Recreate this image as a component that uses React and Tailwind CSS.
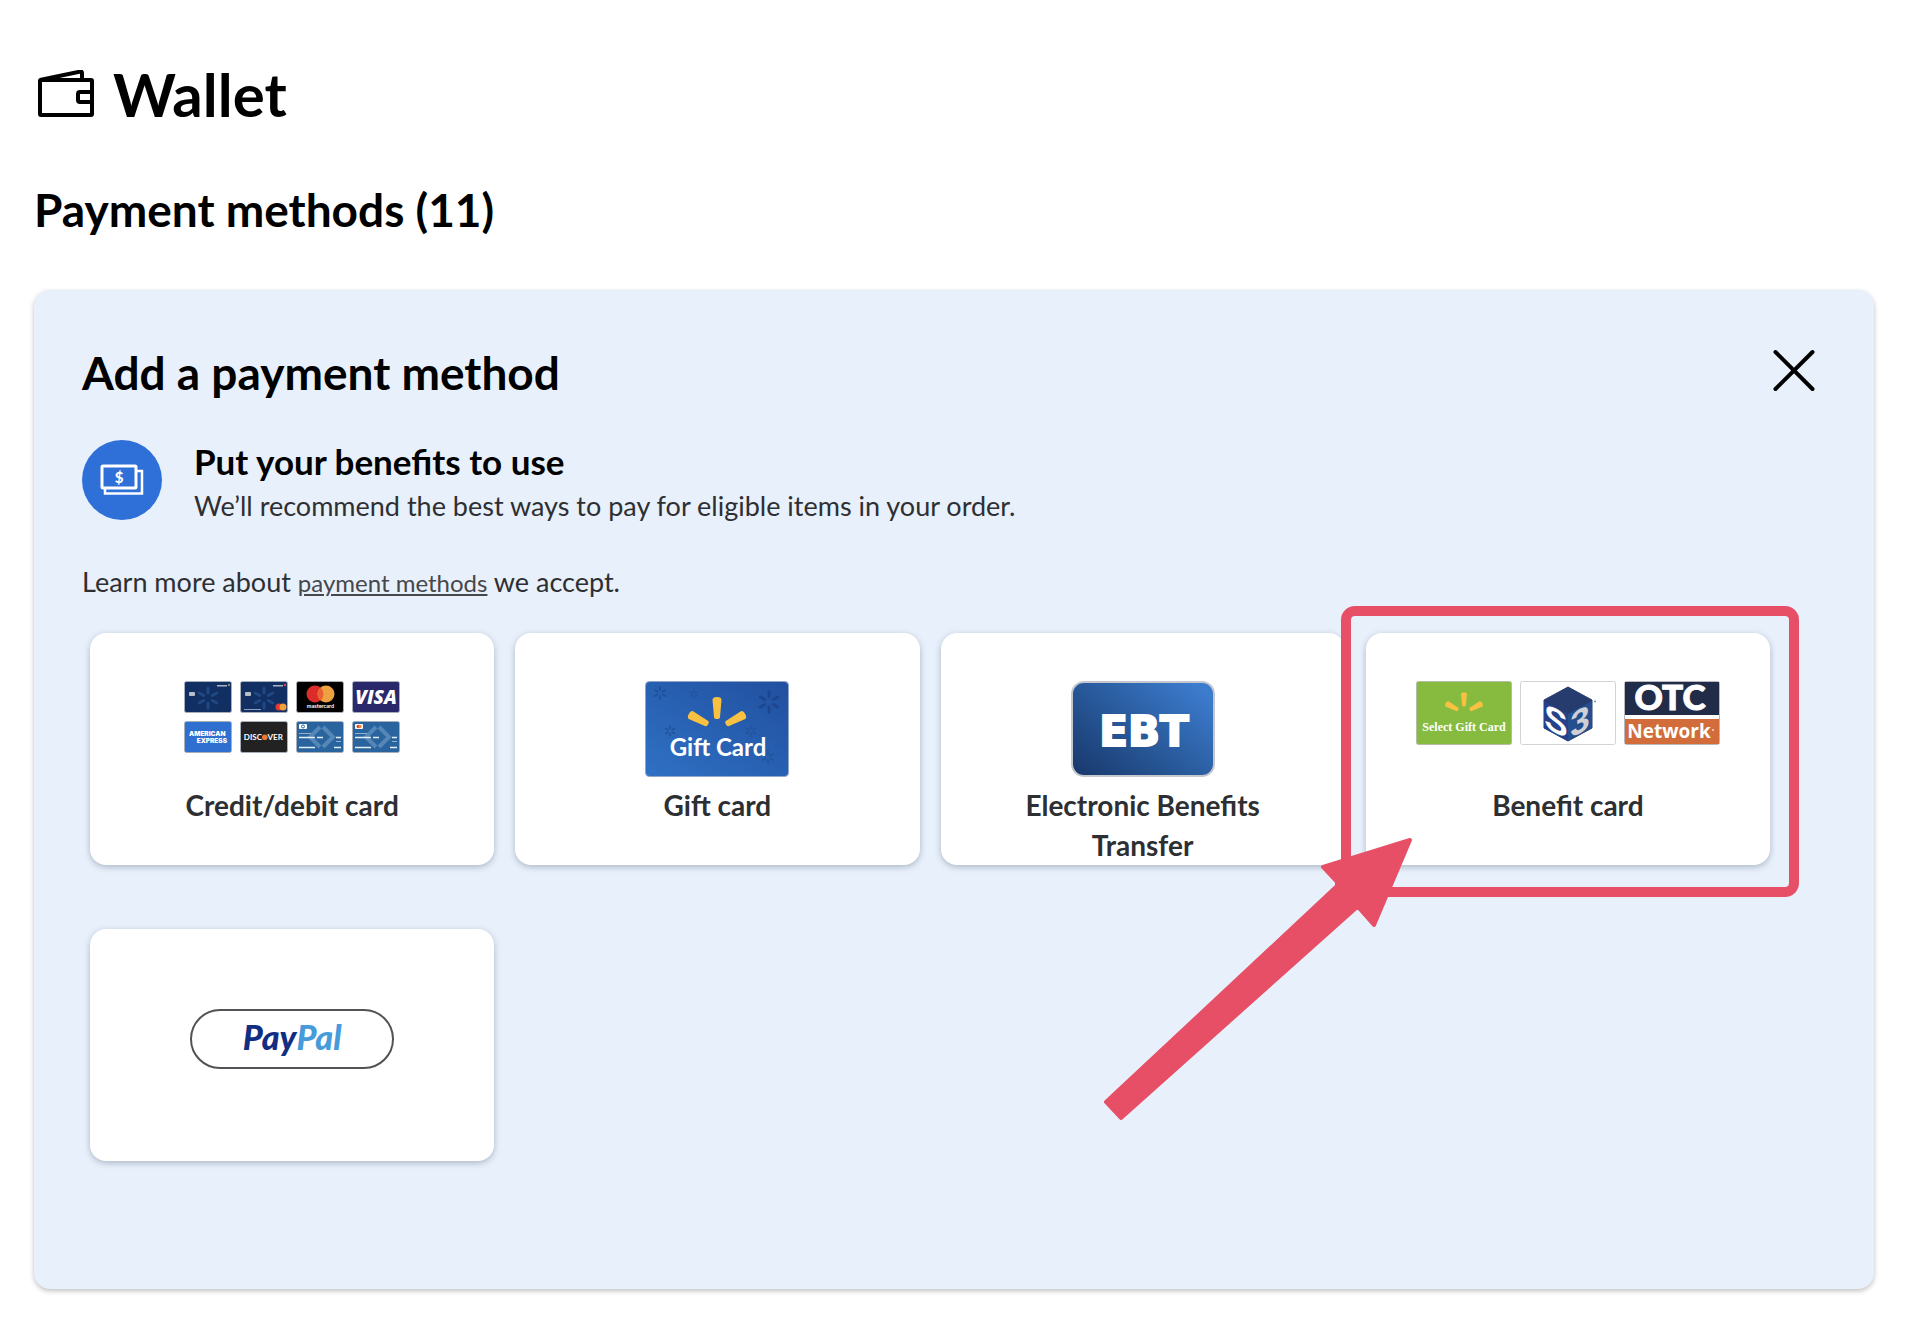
import { useState } from 'react';

function WalletIcon() {
    return (
        <svg className="h-12 w-[58px]" viewBox="0 0 58 48" fill="none" stroke="#000" strokeWidth="4" strokeLinejoin="round" aria-hidden="true">
            <rect x="3" y="10" width="52" height="35" rx="1" />
            <path d="M3 10 43.500 1.500Q45 1.500 45 3V10" />
            <path d="M55 22H43Q41 22 41 24V30Q41 32 43 32H55" />
        </svg>
    );
}

function CashIcon() {
    return (
        <svg className="h-20 w-20 shrink-0" viewBox="0 0 80 80" fill="none" aria-hidden="true">
            <circle cx="40" cy="40" r="40" fill="#2f6fd8" />
            <path d="M55 31H60V53.500H23V48" stroke="#fff" strokeWidth="2.500" />
            <rect x="20" y="26" width="34" height="22" rx="1" stroke="#fff" strokeWidth="3" />
            <text x="37" y="42.500" textAnchor="middle" fill="#fff" fontSize="15" fontWeight="900" fontFamily="Lato, sans-serif">$</text>
        </svg>
    );
}

function Spark({ x, y, scale = 1, color, opacity = 1 }) {
    return (
        <g transform={`translate(${x} ${y}) scale(${scale})`} stroke={color} strokeWidth="3" strokeLinecap="round" opacity={opacity}>
            {[0, 60, 120, 180, 240, 300].map(angle => (
                <path key={angle} d="M0 -5V-10" transform={`rotate(${angle})`} />
            ))}
        </g>
    );
}

// The upper half of the spark: three tapered rays
function Rays({ x, y, scale = 1 }) {
    return (
        <g transform={`translate(${x} ${y}) scale(${scale})`} fill="#f8c142">
            {[0, -62, 62].map(angle => (
                <path key={angle} d="M-4.500 -29Q-4.500 -32 0 -32T4.500 -29L3 -12Q3 -10 0 -10T-3 -12Z" transform={`rotate(${angle})`} />
            ))}
        </g>
    );
}

function MiniCard({ fill, label, children }) {
    return (
        <svg className="h-8 w-12" viewBox="0 0 48 32" role="img" aria-label={label}>
            <rect x="0.500" y="0.500" width="47" height="31" rx="2" fill={fill} stroke="#a9afba" />
            {children}
        </svg>
    );
}

function StoreCard({ label, mastercard }) {
    return (
        <MiniCard fill="#112f62" label={label}>
            <Spark x="24" y="17" color="#24508c" opacity="0.800" />
            <rect x="5" y="11" width="6" height="4" rx="1" fill="#b9bfc6" />
            <rect x="33" y="4" width="10" height="1.500" fill="#a9b4c6" />
            <circle cx="45" cy="4" r="1.200" fill={mastercard ? '#e0453a' : '#8a8f64'} />
            {mastercard && (
                <>
                    <rect x="4" y="28" width="17" height="1" fill="#8ea0bd" />
                    <circle cx="39" cy="26" r="3.500" fill="#e23a2e" />
                    <circle cx="43" cy="26" r="3.500" fill="#f0a03c" />
                </>
            )}
        </MiniCard>
    );
}

function DebitCard({ label, mastercard }) {
    return (
        <MiniCard fill="#29649f" label={label}>
            <path d="M24 6 14 16 24 26M27 6 37 16 27 26" fill="none" stroke="#5486b6" strokeWidth="4" />
            <rect x="3" y="3" width="8" height="5" rx="1" fill="#fff" />
            {mastercard ? (
                <>
                    <circle cx="6.200" cy="5.500" r="1.700" fill="#e23a2e" />
                    <circle cx="8" cy="5.500" r="1.700" fill="#ee8a3c" />
                </>
            ) : (
                <circle cx="7" cy="5.500" r="1.500" fill="none" stroke="#29649f" />
            )}
            <path d="M3 12.500H15M40 20.500H45" stroke="#8fb2d3" />
            <path d="M3 16.500H19M21 16.500H27M40 16.500H45M3 26.500H19M38 26.500H45" stroke="#e4edf6" strokeWidth="1.500" />
        </MiniCard>
    );
}

function CreditArt() {
    return (
        <span className="grid grid-cols-4 gap-2">
            <StoreCard label="Store card" />
            <StoreCard label="Store Mastercard" mastercard />
            <MiniCard fill="#000" label="Mastercard">
                <circle cx="19" cy="13" r="8.500" fill="#dc2b2b" />
                <circle cx="30" cy="13" r="8.500" fill="#eda140" />
                <path d="M24.500 6.500A8.500 8.500 0 0 1 24.500 19.500A8.500 8.500 0 0 1 24.500 6.500Z" fill="#ea6030" />
                <text x="24.500" y="26.500" textAnchor="middle" fill="#fff" fontSize="5.500" fontWeight="700" fontFamily="Lato, sans-serif">mastercard</text>
            </MiniCard>
            <MiniCard fill="#29286b" label="Visa">
                <text x="24" y="22.500" textAnchor="middle" fill="#fff" fontSize="19" fontWeight="800" fontStyle="italic" fontFamily="'Open Sans', sans-serif">VISA</text>
            </MiniCard>
            <MiniCard fill="#2f6fd0" label="American Express">
                <g fill="#fff" fontSize="6.500" fontWeight="900" fontFamily="Inter, sans-serif">
                    <text x="5" y="15">AMERICAN</text>
                    <text x="43" y="21.500" textAnchor="end">EXPRESS</text>
                </g>
            </MiniCard>
            <MiniCard fill="#222" label="Discover">
                <g fill="#fff" fontSize="8" fontWeight="700" fontFamily="Lato, sans-serif">
                    <text x="22" y="19" textAnchor="end">DISC</text>
                    <text x="27.500" y="19">VER</text>
                </g>
                <circle cx="24.800" cy="16.300" r="2.800" fill="#ee7a2e" />
            </MiniCard>
            <DebitCard label="Visa debit" />
            <DebitCard label="Mastercard debit" mastercard />
        </span>
    );
}

function GiftArt() {
    return (
        <svg className="h-24 w-36" viewBox="0 0 144 96" role="img" aria-label="Gift Card">
            <defs>
                <linearGradient id="gift" x1="0" y1="1" x2="1" y2="0">
                    <stop offset="0" stopColor="#2f71c4" />
                    <stop offset="1" stopColor="#214f9f" />
                </linearGradient>
            </defs>
            <rect x="0.500" y="0.500" width="143" height="95" rx="4" fill="url(#gift)" stroke="#8fa6cd" />
            <Spark x="15" y="12" scale={0.6} color="#1d4a91" opacity="0.700" />
            <Spark x="49" y="13" scale={0.4} color="#1d4a91" opacity="0.500" />
            <Spark x="25" y="50" scale={0.5} color="#1d4a91" opacity="0.700" />
            <Spark x="106" y="50" scale={0.5} color="#1d4a91" opacity="0.500" />
            <Spark x="123" y="76" scale={0.6} color="#1d4a91" opacity="0.500" />
            <Spark x="124" y="21" color="#1a4288" opacity="0.700" />
            <Rays x="72" y="48" />
            <text x="73" y="75" textAnchor="middle" fill="#fff" fontSize="24" fontWeight="700" fontFamily="Lato, sans-serif">Gift Card</text>
        </svg>
    );
}

function EbtArt() {
    return (
        <svg className="h-24 w-36" viewBox="0 0 144 96" role="img" aria-label="EBT">
            <defs>
                <linearGradient id="ebt" x1="0" y1="1" x2="1" y2="0.200">
                    <stop offset="0" stopColor="#18376a" />
                    <stop offset="0.500" stopColor="#28599a" />
                    <stop offset="1" stopColor="#3c7bcd" />
                </linearGradient>
            </defs>
            <rect x="1" y="1" width="142" height="94" rx="12" fill="url(#ebt)" stroke="#c4c7cd" strokeWidth="2" />
            <text x="73" y="65" textAnchor="middle" fill="#fff" stroke="#fff" strokeWidth="2" fontSize="42" fontWeight="700" fontFamily="'DejaVu Sans', sans-serif">EBT</text>
        </svg>
    );
}

function BenefitArt() {
    return (
        <span className="flex gap-2">
            <svg className="h-16 w-24" viewBox="0 0 96 64" role="img" aria-label="Select Gift Card">
                <rect x="0.500" y="0.500" width="95" height="63" rx="2" fill="#86bb40" stroke="#b3bda6" />
                <Rays x="48" y="32" scale={0.65} />
                <text x="48" y="50" textAnchor="middle" fill="#fff" fontSize="12" fontWeight="700" fontFamily="'Liberation Serif', serif">Select Gift Card</text>
            </svg>
            <svg className="h-16 w-24 overflow-visible" viewBox="0 0 96 64" role="img" aria-label="S3">
                <rect x="0.500" y="0.500" width="95" height="63" rx="2" fill="#fff" stroke="#d2d3d6" />
                <path d="M48 6 72 19V47L48 60 24 47V19Z" fill="#263c6e" strokeLinejoin="round" stroke="#263c6e" />
                <path d="M24 20 48 33V60L24 47Z" fill="#27408a" />
                <path d="M72 20 48 33V60L72 47Z" fill="#244e8e" />
                <g fontSize="35" fontWeight="700" fontFamily="'Liberation Sans', sans-serif" textAnchor="middle">
                    <text transform="translate(36 52) skewY(28)" fill="#fff">S</text>
                    <text transform="translate(60 52) skewY(-28)" fill="#d0d1d6">3</text>
                </g>
                <circle cx="75" cy="20.500" r="1" fill="#7d86a8" />
            </svg>
            <svg className="h-16 w-24 overflow-visible" viewBox="0 0 96 64" role="img" aria-label="OTC Network">
                <rect x="0.500" y="0.500" width="95" height="63" rx="2" fill="#fff" stroke="#b8b8bd" />
                <path d="M1 1H95V34H1Z" fill="#212c49" />
                <path d="M1 38H95V63H1Z" fill="#d26c3a" />
                <text x="46" y="28.500" textAnchor="middle" fill="#fff" stroke="#fff" strokeWidth="1" fontSize="35" fontWeight="900" fontFamily="Lato, sans-serif">OTC</text>
                <text x="45" y="57" textAnchor="middle" fill="#fff" fontSize="19" fontWeight="700" fontFamily="'Open Sans', sans-serif">Network</text>
                <circle cx="89" cy="49" r="1" fill="#f6ddd0" />
            </svg>
        </span>
    );
}

const methods = [
    { id: 'credit', name: 'Credit/debit card', art: <CreditArt /> },
    { id: 'gift', name: 'Gift card', art: <GiftArt /> },
    { id: 'ebt', name: 'Electronic Benefits Transfer', art: <EbtArt /> },
    { id: 'benefit', name: 'Benefit card', art: <BenefitArt />, highlighted: true },
];

const tileClass = 'flex min-h-[232px] w-full flex-col items-center rounded-2xl bg-white shadow-[0_2px_6px_rgba(60,80,100,0.35)]';

function Highlight() {
    return (
        <>
            <div className="pointer-events-none absolute -top-[27px] -right-[29px] -bottom-8 -left-[25px] rounded-[14px] border-[10px] border-[#e64f66]" />
            <svg className="pointer-events-none absolute top-[200px] -left-[266px] h-[300px] w-[320px]" viewBox="0 0 320 300" aria-hidden="true">
                <path d="M6 269 21 285 256 75 259 75 274 92 310 7 223 34 237 49V53Z" fill="#e64f66" stroke="#e64f66" strokeWidth="4" strokeLinejoin="round" />
            </svg>
        </>
    );
}

export default function App() {
    const [open, setOpen] = useState(true);

    return (
        <main className="bg-white pt-14 pr-[50px] pb-13 pl-[34px] font-['Lato',sans-serif] text-[#2e2f32]">
            <h1 className="flex items-center gap-[18px] pl-[3px] text-[60px] leading-[76px] font-bold text-black">
                <WalletIcon />
                Wallet
            </h1>
            <h2 className="mt-12 text-[46px] leading-[60px] font-bold text-black">Payment methods (11)</h2>

            {open && (
                <section className="mt-[50px] rounded-2xl bg-[#e8f0fb] px-12 pt-12 pb-32 shadow-[0_2px_5px_rgba(0,0,0,0.25)]">
                    <div className="flex items-start justify-between">
                        <h3 className="text-[46px] leading-[70px] font-bold text-black">Add a payment method</h3>
                        <button type="button" aria-label="Close" onClick={() => setOpen(false)} className="p-2">
                            <svg className="h-12 w-12" viewBox="0 0 48 48" stroke="#000" strokeWidth="4" strokeLinecap="round" aria-hidden="true">
                                <path d="M5.500 6 42.500 43M42.500 6 5.500 43" />
                            </svg>
                        </button>
                    </div>

                    <div className="mt-8 flex items-start gap-8">
                        <CashIcon />
                        <div>
                            <h4 className="text-[35px] leading-[42px] font-bold text-black">Put your benefits to use</h4>
                            <p className="text-[27px] leading-[48px]">We’ll recommend the best ways to pay for eligible items in your order.</p>
                        </div>
                    </div>

                    <p className="mt-8 text-[27px] leading-[40px]">
                        Learn more about <a href="#methods" className="text-[24px] text-[#46474a] underline">payment methods</a> we accept.
                    </p>

                    <div className="mt-[30px] mr-14 ml-2 grid grid-cols-4 gap-x-[21px] gap-y-16">
                        {methods.map(method => (
                            <div key={method.id} className="relative">
                                <button type="button" className={`${tileClass} px-16 pt-12`}>
                                    <span className="h-24">{method.art}</span>
                                    <span className="mt-2 text-[28px] leading-[40px] font-bold">{method.name}</span>
                                </button>
                                {method.highlighted && <Highlight />}
                            </div>
                        ))}
                        <button type="button" aria-label="PayPal" className={`${tileClass} justify-center pb-3`}>
                            <span className="flex h-[60px] w-[204px] items-center justify-center rounded-full border-2 border-[#515356] pb-1 text-[34px] leading-[40px] font-black italic">
                                <span className="text-[#112e82]">Pay</span>
                                <span className="text-[#469bdb]">Pal</span>
                            </span>
                        </button>
                    </div>
                </section>
            )}
        </main>
    );
}
